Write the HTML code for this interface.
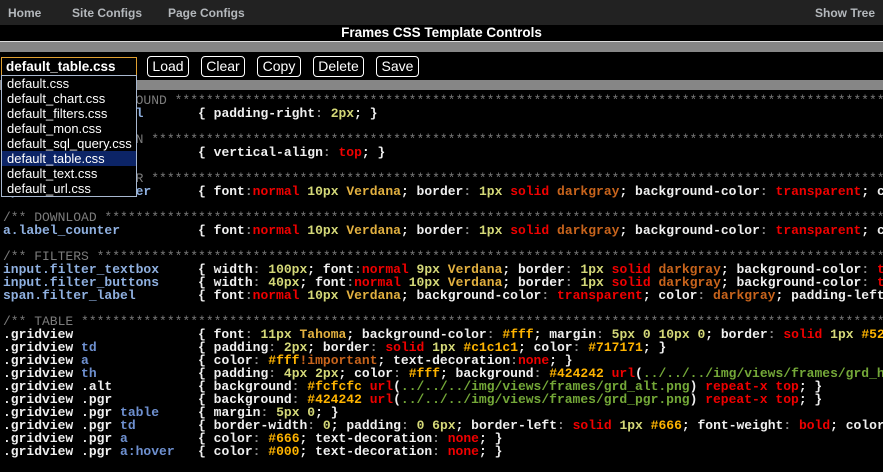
<!DOCTYPE html>
<html><head><meta charset="utf-8"><style>
*{margin:0;padding:0;box-sizing:border-box}
body{width:883px;height:472px;background:#000;overflow:hidden;position:relative;font-family:"Liberation Sans",sans-serif}
#nav{position:absolute;left:0;top:0;width:883px;height:25px;background:#222;color:#b4b8bc;font-size:12px;font-weight:bold}
#nav span{position:absolute;top:6px}
#title{position:absolute;top:25px;left:0;width:883px;height:16px;text-align:center;color:#fff;font-weight:bold;font-size:13.5px;line-height:16px}
#wl{position:absolute;top:41px;left:0;width:883px;height:1px;background:#ddd}
#g1{position:absolute;top:42px;left:0;width:883px;height:10px;background:#868686}
#g2{position:absolute;top:80px;left:0;width:883px;height:10px;background:#868686}
.btn{position:absolute;top:56px;height:21px;border:1px solid #fff;border-radius:4px;color:#fff;font-size:14px;line-height:19px;text-align:center;background:#000}
#sel{position:absolute;left:1px;top:57px;width:136px;height:19px;border:1px solid #e0a030;color:#fff;font-weight:bold;font-size:13.5px;line-height:17px;padding-left:4px;background:#000}
#dd{position:absolute;left:1px;top:75px;width:136px;height:122px;border:1px solid #a8b8d0;background:#000;color:#fff;font-size:13px;z-index:5}
#dd div{height:15px;line-height:15px;padding-left:5px}
#dd .on{background:#0c2466}
#code{position:absolute;left:3px;top:94px;width:880px;overflow:hidden;font-family:"Liberation Mono",monospace;font-size:13px;line-height:13px;color:#f0f0f0;font-weight:bold}
#code div{height:13px;white-space:pre;overflow:hidden}
.c{color:#7c7c7c;font-weight:normal}.s{color:#8fb0e0}.b{color:#6e90d0}.p{color:#8a8a8a}.n{color:#d4d878}.v{color:#e2b040}.h{color:#ffb400}.r{color:#f00000}.o{color:#c8641c}.g{color:#74a838}
</style></head><body>
<div id="nav"><span style="left:8px">Home</span><span style="left:72px">Site Configs</span><span style="left:168px">Page Configs</span><span style="left:815px">Show Tree</span></div>
<div id="title">Frames CSS Template Controls</div>
<div id="wl"></div><div id="g1"></div><div id="g2"></div>
<div id="sel">default_table.css</div>
<div class="btn" style="left:147px;width:42px">Load</div>
<div class="btn" style="left:201px;width:44px">Clear</div>
<div class="btn" style="left:257px;width:44px">Copy</div>
<div class="btn" style="left:313px;width:51px">Delete</div>
<div class="btn" style="left:376px;width:43px">Save</div>
<div id="dd"><div>default.css</div><div>default_chart.css</div><div>default_filters.css</div><div>default_mon.css</div><div>default_sql_query.css</div><div class="on">default_table.css</div><div>default_text.css</div><div>default_url.css</div></div>
<div id="code"><div class="c">/** COLUMN BACKGROUND ***************************************************************************************************</div><div><span class="s">td.background_cell</span>       { padding-right<span class="p">:</span> <span class="n">2px</span>; }</div><div> </div><div class="c">/** VERTICAL ALIGN ****************************************************************************************************</div><div><span class="s">td.vertical_top</span>          { vertical-align<span class="p">:</span> <span class="r">top</span>; }</div><div> </div><div class="c">/** COUNTER HEADER *****************************************************************************************************</div><div><span class="s">span.counter_header</span>      { font<span class="p">:</span><span class="r">normal</span> <span class="n">10px</span> <span class="v">Verdana</span>; border<span class="p">:</span> <span class="n">1px</span> <span class="r">solid</span> <span class="o">darkgray</span>; background-color<span class="p">:</span> <span class="r">transparent</span>; color<span class="p">:</span> <span class="o">darkgray</span>; }</div><div> </div><div class="c">/** DOWNLOAD ***********************************************************************************************************</div><div><span class="s">a.label_counter</span>          { font<span class="p">:</span><span class="r">normal</span> <span class="n">10px</span> <span class="v">Verdana</span>; border<span class="p">:</span> <span class="n">1px</span> <span class="r">solid</span> <span class="o">darkgray</span>; background-color<span class="p">:</span> <span class="r">transparent</span>; color<span class="p">:</span> <span class="o">darkgray</span>; }</div><div> </div><div class="c">/** FILTERS ************************************************************************************************************</div><div><span class="s">input.filter_textbox</span>     { width<span class="p">:</span> <span class="n">100px</span>; font<span class="p">:</span><span class="r">normal</span> <span class="n">9px</span> <span class="v">Verdana</span>; border<span class="p">:</span> <span class="n">1px</span> <span class="r">solid</span> <span class="o">darkgray</span>; background-color<span class="p">:</span> <span class="r">transparent</span>; }</div><div><span class="s">input.filter_buttons</span>     { width<span class="p">:</span> <span class="n">40px</span>; font<span class="p">:</span><span class="r">normal</span> <span class="n">10px</span> <span class="v">Verdana</span>; border<span class="p">:</span> <span class="n">1px</span> <span class="r">solid</span> <span class="o">darkgray</span>; background-color<span class="p">:</span> <span class="r">transparent</span>; }</div><div><span class="s">span.filter_label</span>        { font<span class="p">:</span><span class="r">normal</span> <span class="n">10px</span> <span class="v">Verdana</span>; background-color<span class="p">:</span> <span class="r">transparent</span>; color<span class="p">:</span> <span class="o">darkgray</span>; padding-left<span class="p">:</span> <span class="n">5px</span>; }</div><div> </div><div class="c">/** TABLE **************************************************************************************************************</div><div>.gridview                { font<span class="p">:</span> <span class="n">11px</span> <span class="v">Tahoma</span>; background-color<span class="p">:</span> <span class="h">#fff</span>; margin<span class="p">:</span> <span class="n">5px 0 10px 0</span>; border<span class="p">:</span> <span class="r">solid</span> <span class="n">1px</span> <span class="h">#525252</span>; }</div><div>.gridview <span class="b">td</span>             { padding<span class="p">:</span> <span class="n">2px</span>; border<span class="p">:</span> <span class="r">solid</span> <span class="n">1px</span> <span class="h">#c1c1c1</span>; color<span class="p">:</span> <span class="h">#717171</span>; }</div><div>.gridview <span class="b">a</span>              { color<span class="p">:</span> <span class="h">#fff</span><span class="o">!important</span>; text-decoration<span class="p">:</span><span class="r">none</span>; }</div><div>.gridview <span class="b">th</span>             { padding<span class="p">:</span> <span class="n">4px 2px</span>; color<span class="p">:</span> <span class="h">#fff</span>; background<span class="p">:</span> <span class="h">#424242</span> <span class="r">url</span>(<span class="g">../../../img/views/frames/grd_head.png</span>) <span class="r">repeat-x top</span>; }</div><div>.gridview .alt           { background<span class="p">:</span> <span class="h">#fcfcfc</span> <span class="r">url</span>(<span class="g">../../../img/views/frames/grd_alt.png</span>) <span class="r">repeat-x top</span>; }</div><div>.gridview .pgr           { background<span class="p">:</span> <span class="h">#424242</span> <span class="r">url</span>(<span class="g">../../../img/views/frames/grd_pgr.png</span>) <span class="r">repeat-x top</span>; }</div><div>.gridview .pgr <span class="b">table</span>     { margin<span class="p">:</span> <span class="n">5px 0</span>; }</div><div>.gridview .pgr <span class="b">td</span>        { border-width<span class="p">:</span> <span class="n">0</span>; padding<span class="p">:</span> <span class="n">0 6px</span>; border-left<span class="p">:</span> <span class="r">solid</span> <span class="n">1px</span> <span class="h">#666</span>; font-weight<span class="p">:</span> <span class="r">bold</span>; color<span class="p">:</span> <span class="h">#fff</span>; }</div><div>.gridview .pgr <span class="b">a</span>         { color<span class="p">:</span> <span class="h">#666</span>; text-decoration<span class="p">:</span> <span class="r">none</span>; }</div><div>.gridview .pgr <span class="b">a:hover</span>   { color<span class="p">:</span> <span class="h">#000</span>; text-decoration<span class="p">:</span> <span class="r">none</span>; }</div></div>
</body></html>
